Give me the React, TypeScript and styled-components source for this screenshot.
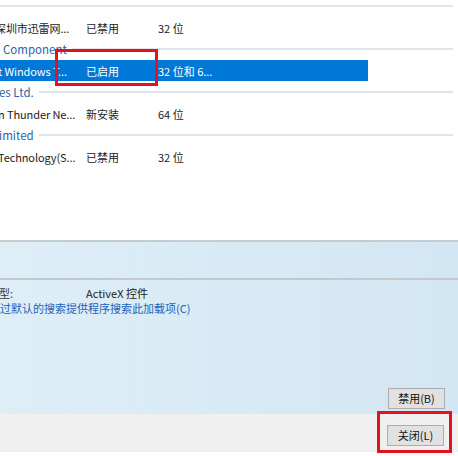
import styled, { createGlobalStyle } from "styled-components";

const GlobalStyle = createGlobalStyle`
  html, body {
    margin: 0;
    padding: 0;
    background: #ffffff;
  }
  body {
    font-family: "Noto Sans CJK SC", "Noto Sans", sans-serif;
    font-size: 11px;
    color: #1b1b1b;
  }
`;

const Screen = styled.div`
  position: relative;
  width: 458px;
  height: 456px;
  overflow: hidden;
  display: flex;
  flex-direction: column;
  background: #ffffff;
`;

const List = styled.div`
  height: 245px;
  margin-top: -5px;
  flex-shrink: 0;
  overflow: hidden;
  background: #ffffff;
`;

const GroupHeader = styled.div`
  display: flex;
  align-items: center;
  gap: 5px;
  width: 453px;
  height: 22px;
  overflow: hidden;
`;

const GroupLabel = styled.span<{ $shift?: number }>`
  margin-left: ${(p) => p.$shift ?? 0}px;
  color: #2b64a8;
  font-size: 11.5px;
  white-space: nowrap;
`;

const GroupLine = styled.div`
  flex: 1;
  height: 2px;
  background: #e1e5ea;
`;

const Row = styled.div<{ $selected?: boolean }>`
  display: grid;
  grid-template-columns: 86px 72px 210px;
  width: 368px;
  height: 21px;
  align-items: center;
  background: ${(p) => (p.$selected ? "#0078d7" : "transparent")};
  color: ${(p) => (p.$selected ? "#ffffff" : "#1b1b1b")};
`;

const Cell = styled.div`
  overflow: hidden;
  white-space: nowrap;
`;

const CellText = styled.span<{ $shift?: number }>`
  display: inline-block;
  margin-left: ${(p) => p.$shift ?? 0}px;
  letter-spacing: -0.1px;
`;

const Details = styled.div`
  height: 174px;
  flex-shrink: 0;
  box-sizing: border-box;
  border-top: 2px solid #c6cbd0;
  background: linear-gradient(to right, #ddeef7, #d3e6f3);
  display: flex;
  flex-direction: column;
`;

const DetailsHead = styled.div`
  height: 36px;
`;

const Divider = styled.div`
  height: 2px;
  background: #c3c8cd;
`;

const InfoList = styled.div`
  padding-top: 5px;
  display: flex;
  flex-direction: column;
`;

const InfoRow = styled.div`
  display: grid;
  grid-template-columns: 86px 1fr;
  height: 15px;
  align-items: center;
  white-space: nowrap;
`;

const InfoLabel = styled.span<{ $shift?: number }>`
  margin-left: ${(p) => p.$shift ?? 0}px;
  color: #3a3a3a;
`;

const SearchLink = styled.a`
  color: #1c62b9;
  text-decoration: none;
  white-space: nowrap;
  cursor: pointer;
`;

const ButtonBar = styled.div<{ $right: number; $top?: number; $bottom?: number }>`
  display: flex;
  justify-content: flex-end;
  padding: ${(p) => p.$top ?? 0}px ${(p) => p.$right}px ${(p) => p.$bottom ?? 0}px 0;
`;

const PanelButtons = styled(ButtonBar)`
  margin-top: auto;
`;

const WinButton = styled.button`
  width: 57px;
  height: 21px;
  padding: 0;
  box-sizing: border-box;
  border: 1px solid #adadad;
  background: #e1e1e1;
  color: #111111;
  font-family: "Noto Sans CJK SC", "Noto Sans", sans-serif;
  font-size: 11px;
  line-height: 19px;
`;

const Footer = styled.div`
  height: 38px;
  flex-shrink: 0;
  background: #f0f0f0;
`;

const Marker = styled.div<{ $x: number; $y: number; $w: number; $h: number }>`
  position: absolute;
  left: ${(p) => p.$x}px;
  top: ${(p) => p.$y}px;
  width: ${(p) => p.$w}px;
  height: ${(p) => p.$h}px;
  box-sizing: border-box;
  border: 3px solid #e3121b;
  pointer-events: none;
`;

type Item = {
  publisher: string;
  shift: number;
  status: string;
  arch: string;
  selected?: boolean;
};

type Group = { label: string; shift: number; items: Item[] };

const groups: Group[] = [
  {
    label: "",
    shift: 0,
    items: [{ publisher: "深圳市迅雷网...", shift: -5, status: "已禁用", arch: "32 位" }],
  },
  {
    label: "Component",
    shift: 3,
    items: [
      {
        publisher: "t Windows T...",
        shift: -2,
        status: "已启用",
        arch: "32 位和 6...",
        selected: true,
      },
    ],
  },
  {
    label: "es Ltd.",
    shift: -1,
    items: [{ publisher: "n Thunder Ne...", shift: -2, status: "新安装", arch: "64 位" }],
  },
  {
    label: "imited",
    shift: -1,
    items: [{ publisher: "Technology(S...", shift: -2, status: "已禁用", arch: "32 位" }],
  },
];

const App = () => {
  return (
    <>
      <GlobalStyle />
      <Screen>
        <List>
          {groups.map((group, gi) => (
            <div key={gi}>
              <GroupHeader>
                {group.label && (
                  <GroupLabel $shift={group.shift}>{group.label}</GroupLabel>
                )}
                <GroupLine />
              </GroupHeader>
              {group.items.map((item, i) => (
                <Row key={i} $selected={item.selected}>
                  <Cell>
                    <CellText $shift={item.shift}>{item.publisher}</CellText>
                  </Cell>
                  <Cell>{item.status}</Cell>
                  <Cell>{item.arch}</Cell>
                </Row>
              ))}
            </div>
          ))}
        </List>
        <Details>
          <DetailsHead />
          <Divider />
          <InfoList>
            <InfoRow>
              <InfoLabel $shift={-1}>型:</InfoLabel>
              <span>ActiveX 控件</span>
            </InfoRow>
            <InfoRow>
              <SearchLink>过默认的搜索提供程序搜索此加载项(C)</SearchLink>
            </InfoRow>
          </InfoList>
          <PanelButtons $right={13} $bottom={5}>
            <WinButton>禁用(B)</WinButton>
          </PanelButtons>
        </Details>
        <Footer>
          <ButtonBar $right={14} $top={11}>
            <WinButton>关闭(L)</WinButton>
          </ButtonBar>
        </Footer>
        <Marker $x={55} $y={49} $w={103} $h={37} />
        <Marker $x={377} $y={411} $w={75} $h={42} />
      </Screen>
    </>
  );
};

export default App;
